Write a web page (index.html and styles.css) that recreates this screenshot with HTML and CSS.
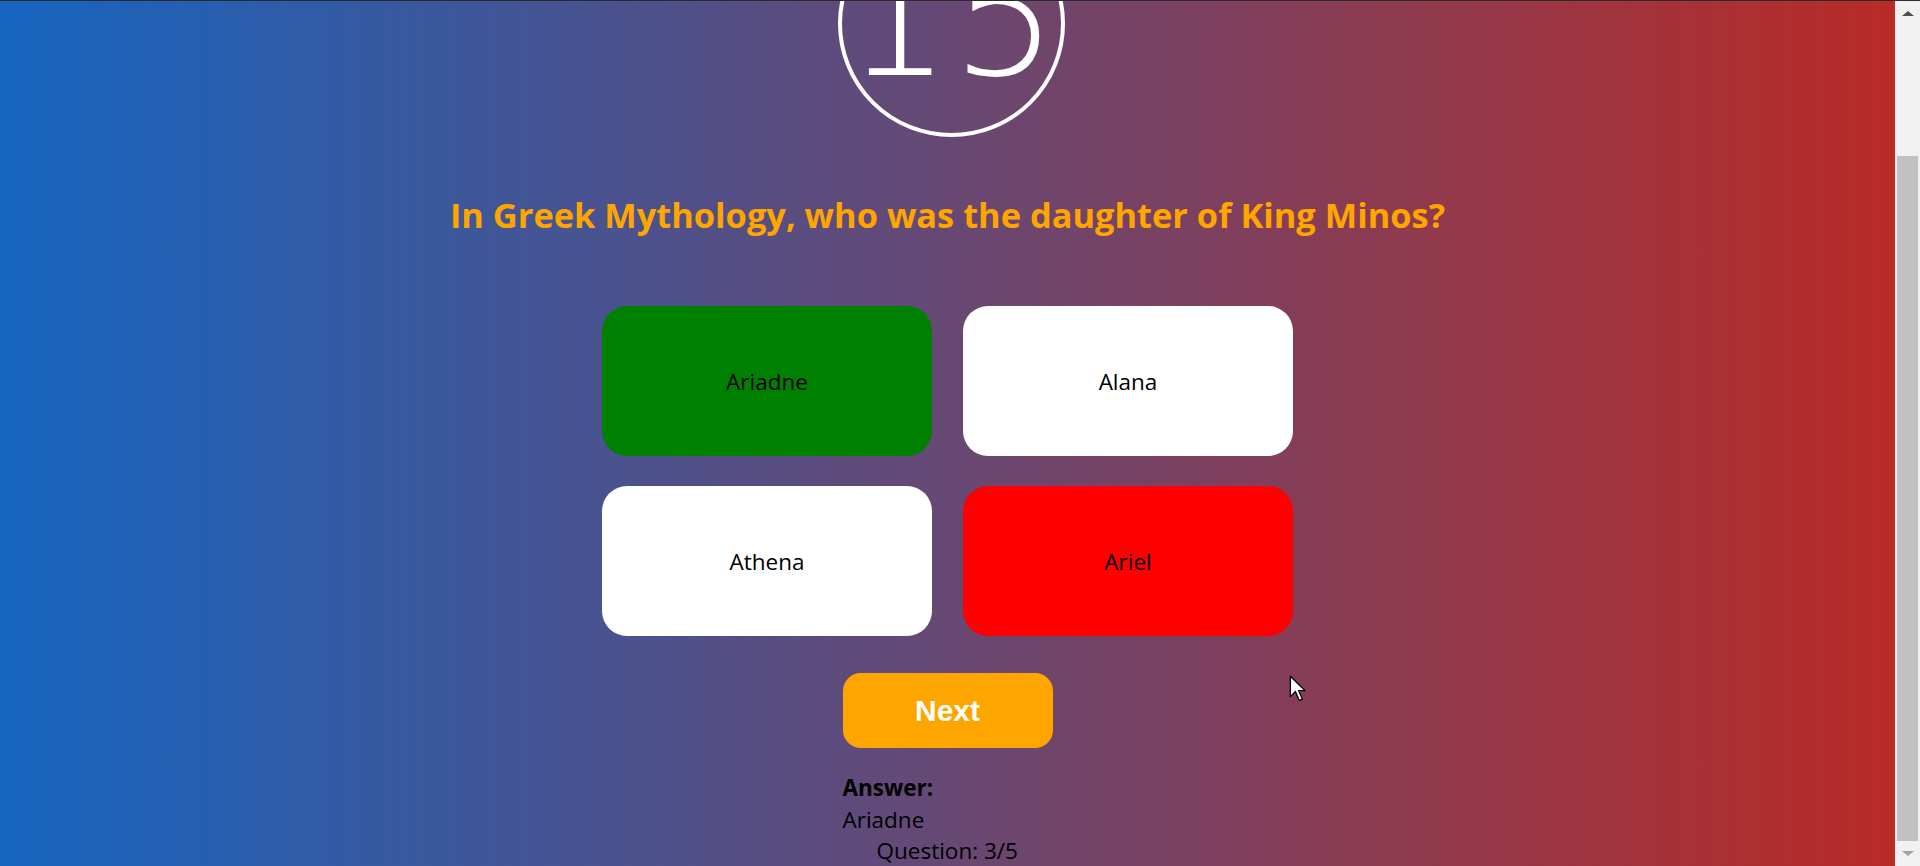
FILE: index.html
```html
<!DOCTYPE html>
<html lang="en">
<head>
<meta charset="utf-8">
<title>Quiz</title>
<link rel="stylesheet" href="styles.css">
</head>
<body>
<div class="window">
  <main class="quiz">
    <div class="timer"><span class="timer-num">15</span></div>
    <h1 class="question">In Greek Mythology, who was the daughter of King Minos?</h1>
    <div class="answers">
      <button class="answer correct">Ariadne</button>
      <button class="answer">Alana</button>
      <button class="answer">Athena</button>
      <button class="answer wrong">Ariel</button>
    </div>
    <div class="footer">
      <button class="next">Next</button>
      <div class="result">
        <div class="result-label">Answer:</div>
        <div class="result-value">Ariadne</div>
        <div class="progress">Question: 3/5</div>
      </div>
    </div>
  </main>
  <div class="scrollbar" aria-hidden="true">
    <div class="sb-btn"><span class="sb-arrow up"></span></div>
    <div class="sb-track"><div class="sb-thumb"></div></div>
    <div class="sb-btn"><span class="sb-arrow down"></span></div>
  </div>
  <svg class="cursor" width="18" height="28" viewBox="0 0 14 22" aria-hidden="true">
    <path d="M1 1 L1 17 L5 13 L8 20 L10.5 19 L7.5 12.3 L12.5 12.3 Z" fill="#fff" stroke="#000" stroke-width="1" stroke-linejoin="round"/>
  </svg>
</div>
</body>
</html>
```
FILE: styles.css
```css
* { box-sizing: border-box; }

html, body {
  margin: 0;
  padding: 0;
  height: 100%;
  overflow: hidden;
}

body {
  font-family: "Open Sans", "Noto Sans", sans-serif;
  color: #000;
}

.window {
  position: relative;
  display: flex;
  height: 866px;
  border-top: 1px solid #2b2b2b;
}

.quiz {
  flex: 1;
  min-width: 0;
  height: 865px;
  overflow: hidden;
  display: flex;
  flex-direction: column;
  align-items: center;
  background: linear-gradient(to right, #1565c0, #b92b27);
}

.timer {
  flex-shrink: 0;
  width: 227px;
  height: 227px;
  margin-top: -91px;
  margin-left: 7px;
  border: 4px solid #fff;
  border-radius: 50%;
  display: flex;
  align-items: center;
  justify-content: center;
  overflow: visible;
}

.timer-num {
  font-family: "DejaVu Sans", sans-serif;
  font-weight: 200;
  font-size: 168px;
  line-height: 168px;
  color: #fff;
  margin-top: -13px;
  white-space: nowrap;
}

.question {
  margin: 58px 0 0;
  font-size: 34.4px;
  line-height: 40px;
  font-weight: 700;
  color: #ffa500;
  white-space: nowrap;
}

.answers {
  margin-top: 71px;
  display: grid;
  grid-template-columns: 330px 330px;
  grid-auto-rows: 150px;
  column-gap: 31px;
  row-gap: 30px;
}

.answer {
  border: none;
  border-radius: 25px;
  background: #fff;
  font-family: "Open Sans", "Noto Sans", sans-serif;
  font-size: 22.5px;
  color: #000;
  padding: 0;
}

.answer.correct { background: #008000; }
.answer.wrong { background: #ff0000; }

.footer {
  width: 210px;
  margin-top: 37px;
  display: flex;
  flex-direction: column;
}

.next {
  width: 210px;
  height: 75px;
  border: none;
  border-radius: 18px;
  background: #ffa500;
  color: #fff;
  font-family: "Liberation Sans", Arial, sans-serif;
  font-weight: 700;
  font-size: 30px;
  padding: 0;
}

.result {
  margin-top: 24px;
  font-size: 22.5px;
  line-height: 31.5px;
  white-space: nowrap;
}

.result-label { font-weight: 700; }

.progress { padding-left: 34px; }

.scrollbar {
  flex: 0 0 25px;
  display: flex;
  flex-direction: column;
  background: #f1f1f1;
}

.sb-btn {
  flex: 0 0 25px;
  display: flex;
  align-items: center;
  justify-content: center;
}

.sb-arrow {
  width: 0;
  height: 0;
  border-left: 6px solid transparent;
  border-right: 6px solid transparent;
}

.sb-arrow.up { border-bottom: 5px solid #505050; }
.sb-arrow.down { border-top: 5px solid #a3a3a3; }

.sb-track {
  flex: 1;
  display: flex;
  flex-direction: column;
  justify-content: flex-end;
  padding: 0 2px;
}

.sb-thumb {
  height: 685px;
  background: #c1c1c1;
}

.cursor {
  position: absolute;
  left: 1289px;
  top: 674px;
}
```
